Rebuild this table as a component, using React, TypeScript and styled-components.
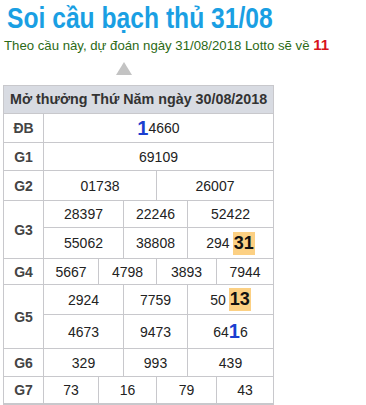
import styled, { createGlobalStyle } from 'styled-components';

const GlobalStyle = createGlobalStyle`
  body {
    margin: 0;
    background: #fff;
    font-family: "Liberation Sans", Arial, sans-serif;
  }
`;

type Cell = { text: string; hit?: 'blue' | 'box'; at?: number; len?: number };
type Line = { h: number; cells: Cell[] };

const rows: { label: string; cols: string; lines: Line[] }[] = [
  { label: 'ĐB', cols: '1fr', lines: [{ h: 28, cells: [{ text: '14660', hit: 'blue', at: 0, len: 1 }] }] },
  { label: 'G1', cols: '1fr', lines: [{ h: 27, cells: [{ text: '69109' }] }] },
  { label: 'G2', cols: '113px 1fr', lines: [{ h: 29, cells: [{ text: '01738' }, { text: '26007' }] }] },
  {
    label: 'G3',
    cols: '80px 64px 1fr',
    lines: [
      { h: 26, cells: [{ text: '28397' }, { text: '22246' }, { text: '52422' }] },
      { h: 30, cells: [{ text: '55062' }, { text: '38808' }, { text: '29431', hit: 'box', at: 3, len: 2 }] },
    ],
  },
  {
    label: 'G4',
    cols: '55px 58px 60px 1fr',
    lines: [{ h: 25, cells: [{ text: '5667' }, { text: '4798' }, { text: '3893' }, { text: '7944' }] }],
  },
  {
    label: 'G5',
    cols: '80px 64px 1fr',
    lines: [
      { h: 29, cells: [{ text: '2924' }, { text: '7759' }, { text: '5013', hit: 'box', at: 2, len: 2 }] },
      { h: 33, cells: [{ text: '4673' }, { text: '9473' }, { text: '6416', hit: 'blue', at: 2, len: 1 }] },
    ],
  },
  { label: 'G6', cols: '80px 64px 1fr', lines: [{ h: 27, cells: [{ text: '329' }, { text: '993' }, { text: '439' }] }] },
  {
    label: 'G7',
    cols: '55px 58px 60px 1fr',
    lines: [{ h: 26, cells: [{ text: '73' }, { text: '16' }, { text: '79' }, { text: '43' }] }],
  },
];

const Number = ({ cell }: { cell: Cell }) => {
  if (!cell.hit || cell.at === undefined || !cell.len) return <>{cell.text}</>;
  const before = cell.text.slice(0, cell.at);
  const mid = cell.text.slice(cell.at, cell.at + cell.len);
  const after = cell.text.slice(cell.at + cell.len);
  return (
    <>
      {before}
      {cell.hit === 'blue' ? <BlueDigit>{mid}</BlueDigit> : <BoxDigit>{mid}</BoxDigit>}
      {after}
    </>
  );
};

export default function App() {
  return (
    <Page>
      <GlobalStyle />
      <Title>
        <TitleText>Soi cầu bạch thủ 31/08</TitleText>
      </Title>
      <Subtitle>
        Theo cầu này, dự đoán ngày 31/08/2018 Lotto sẽ về <Red>11</Red>
      </Subtitle>
      <Arrow />
      <Table>
        <Header>Mở thưởng Thứ Năm ngày 30/08/2018</Header>
        {rows.map((row) => (
          <Row key={row.label}>
            <Label>{row.label}</Label>
            <Lines>
              {row.lines.map((line, i) => (
                <LineRow key={i} $cols={row.cols} $h={line.h}>
                  {line.cells.map((cell, j) => (
                    <Value key={j}>
                      <Number cell={cell} />
                    </Value>
                  ))}
                </LineRow>
              ))}
            </Lines>
          </Row>
        ))}
      </Table>
    </Page>
  );
}

const Page = styled.div`
  width: 366px;
  height: 405px;
  overflow: hidden;
  padding-top: 2px;
  box-sizing: border-box;
`;

const Title = styled.h1`
  margin: 0 0 0 7px;
  font-size: 29px;
  line-height: 32px;
  font-weight: 700;
  color: #1a9fe3;
  white-space: nowrap;
`;

const TitleText = styled.span`
  display: inline-block;
  transform: scaleX(0.85);
  transform-origin: left center;
`;

const Subtitle = styled.div`
  margin: 3px 0 0 4px;
  font-size: 13.2px;
  line-height: 16px;
  color: #2c6a16;
`;

const Red = styled.span`
  color: #d7131c;
  font-weight: 700;
  font-size: 15px;
`;

const Arrow = styled.div`
  width: 0;
  height: 0;
  margin: 8px 0 0 116px;
  border-left: 8px solid transparent;
  border-right: 8px solid transparent;
  border-bottom: 13px solid #c3c3c3;
`;

const Table = styled.div`
  margin: 10px 0 0 3px;
  width: 271px;
  border: 1px solid #c8c8cc;
  border-bottom: 3px solid #c8c8cc;
  box-sizing: border-box;
`;

const Header = styled.div`
  height: 27px;
  line-height: 27px;
  background: #d8dbe2;
  border-bottom: 1px solid #c8c8cc;
  padding-left: 6px;
  font-size: 14.3px;
  font-weight: 700;
  color: #333;
  white-space: nowrap;
`;

const Row = styled.div`
  display: grid;
  grid-template-columns: 40px 1fr;
  border-bottom: 1px solid #c8c8cc;
  &:last-child {
    border-bottom: none;
  }
`;

const Label = styled.div`
  display: flex;
  align-items: center;
  justify-content: center;
  border-right: 1px solid #c8c8cc;
  font-size: 14px;
  font-weight: 700;
  color: #444;
`;

const Lines = styled.div`
  display: flex;
  flex-direction: column;
`;

const LineRow = styled.div<{ $cols: string; $h: number }>`
  display: grid;
  grid-template-columns: ${(p) => p.$cols};
  height: ${(p) => p.$h}px;
  border-bottom: 1px solid #c8c8cc;
  &:last-child {
    border-bottom: none;
  }
`;

const Value = styled.div`
  display: flex;
  align-items: center;
  justify-content: center;
  border-right: 1px solid #c8c8cc;
  font-size: 14px;
  color: #222;
  &:last-child {
    border-right: none;
  }
`;

const BlueDigit = styled.span`
  color: #1b3fd0;
  font-weight: 700;
  font-size: 20px;
`;

const BoxDigit = styled.span`
  display: inline-block;
  background: #fcd083;
  color: #111;
  font-weight: 700;
  font-size: 18px;
  line-height: 23px;
  padding: 0 1px;
  margin-left: 3px;
`;
